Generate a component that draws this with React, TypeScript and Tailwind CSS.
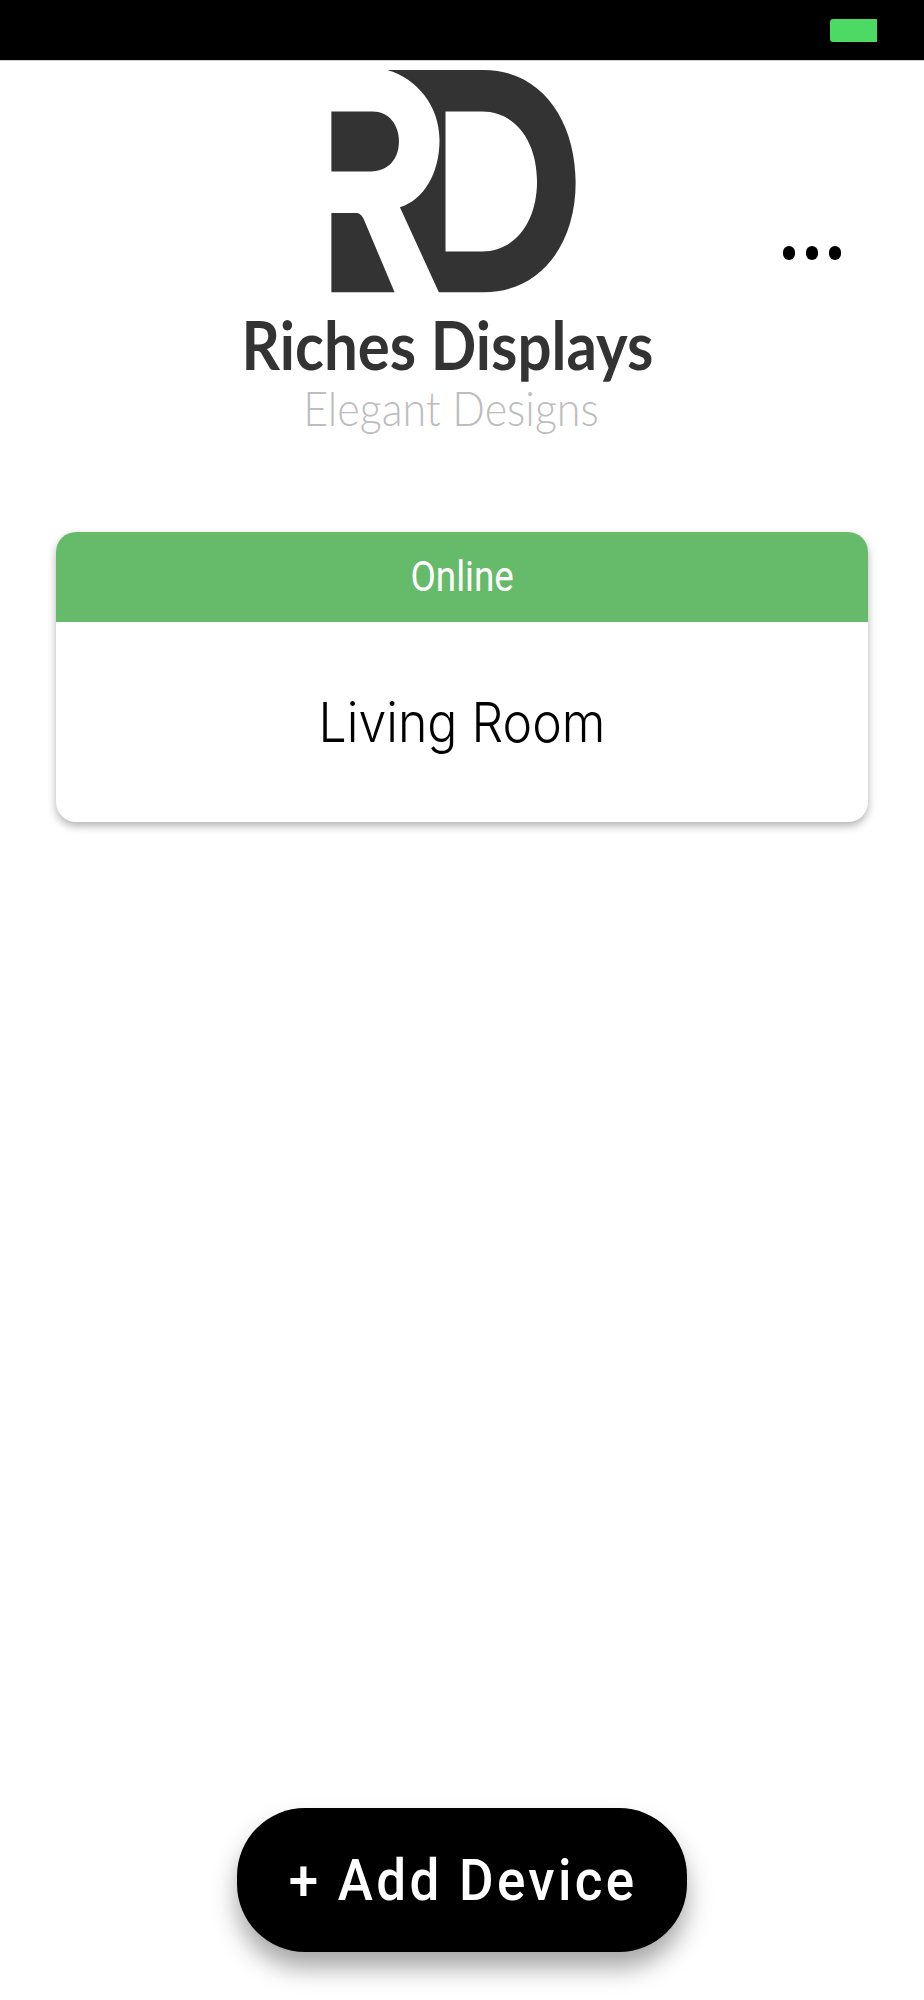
import React from 'react';

const RdLogo: React.FC = () => (
  <svg viewBox="332 60 734 670" className="w-[245px] h-[223px] block" fill="#333333">
    <path d="M500 60 L790 60 C965 60 1066 215 1066 398 C1066 590 955 728 790 728 L655 728 L538 472 C610 450 657 370 657 270 C657 170 590 85 500 60 Z M675 185 L675 605 L785 605 C885 605 950 515 950 395 C950 275 885 185 785 185 Z" fillRule="evenodd" />
    <path d="M332 185 L455 185 C505 185 535 225 535 275 C535 325 505 365 450 365 L332 365 Z" />
    <path d="M332 490 L405 490 C418 490 425 498 431 512 L522 728 L332 728 Z" />
  </svg>
);

const App: React.FC = () => {
  return (
    <div className="w-[924px] h-[2000px] bg-white flex flex-col font-['Roboto',sans-serif] overflow-hidden">
      {/* Status bar */}
      <div className="h-[61px] shrink-0 bg-black border-b border-[#d0d0d0] flex justify-end pt-[19px] pr-[47px]">
        <div className="w-[47px] h-[23px] bg-[#4cd964] rounded-l-[3px]"></div>
      </div>

      {/* Logo header */}
      <div className="relative flex flex-col items-center pt-[9px] h-[471px] shrink-0">
        <div className="ml-[-17px]">
          <RdLogo />
        </div>
        <div className="mt-[18px] ml-[-29px] font-['Lato',sans-serif] font-bold text-[60px] leading-[68px] text-[#333333] whitespace-nowrap scale-y-110">Riches Displays</div>
        <div className="mt-[4px] ml-[-22px] font-['Lato',sans-serif] font-light text-[43px] leading-[50px] text-[#bdbdbd] whitespace-nowrap scale-y-110">Elegant Designs</div>
        <div className="absolute left-[783px] top-[185px] flex gap-[11px]">
          <span className="w-[12px] h-[14px] rounded-full bg-black"></span>
          <span className="w-[12px] h-[14px] rounded-full bg-black"></span>
          <span className="w-[12px] h-[14px] rounded-full bg-black"></span>
        </div>
      </div>

      {/* Device card */}
      <div className="mx-[56px] w-[812px] h-[290px] rounded-[20px] bg-white shadow-[0_4px_8px_rgba(0,0,0,0.3)] overflow-hidden">
        <div className="h-[90px] bg-[#66bb6a] flex items-center justify-center text-white text-[40px]">
          <span className="scale-x-[0.92] scale-y-105">Online</span>
        </div>
        <div className="h-[200px] flex items-center justify-center font-['Inter',sans-serif] font-light text-[50px] text-black">
          <span className="scale-y-110">Living Room</span>
        </div>
      </div>

      <div className="flex-1"></div>

      {/* Add device */}
      <div className="flex justify-center pb-[48px]">
        <button className="w-[450px] h-[144px] rounded-[68px] bg-black text-white text-[53px] font-medium tracking-[3.3px] pt-[2px] pl-[2px] shadow-[0_16px_24px_rgba(0,0,0,0.35)]">
          <span className="inline-block scale-y-110">+ Add Device</span>
        </button>
      </div>
    </div>
  );
};

export default App;
